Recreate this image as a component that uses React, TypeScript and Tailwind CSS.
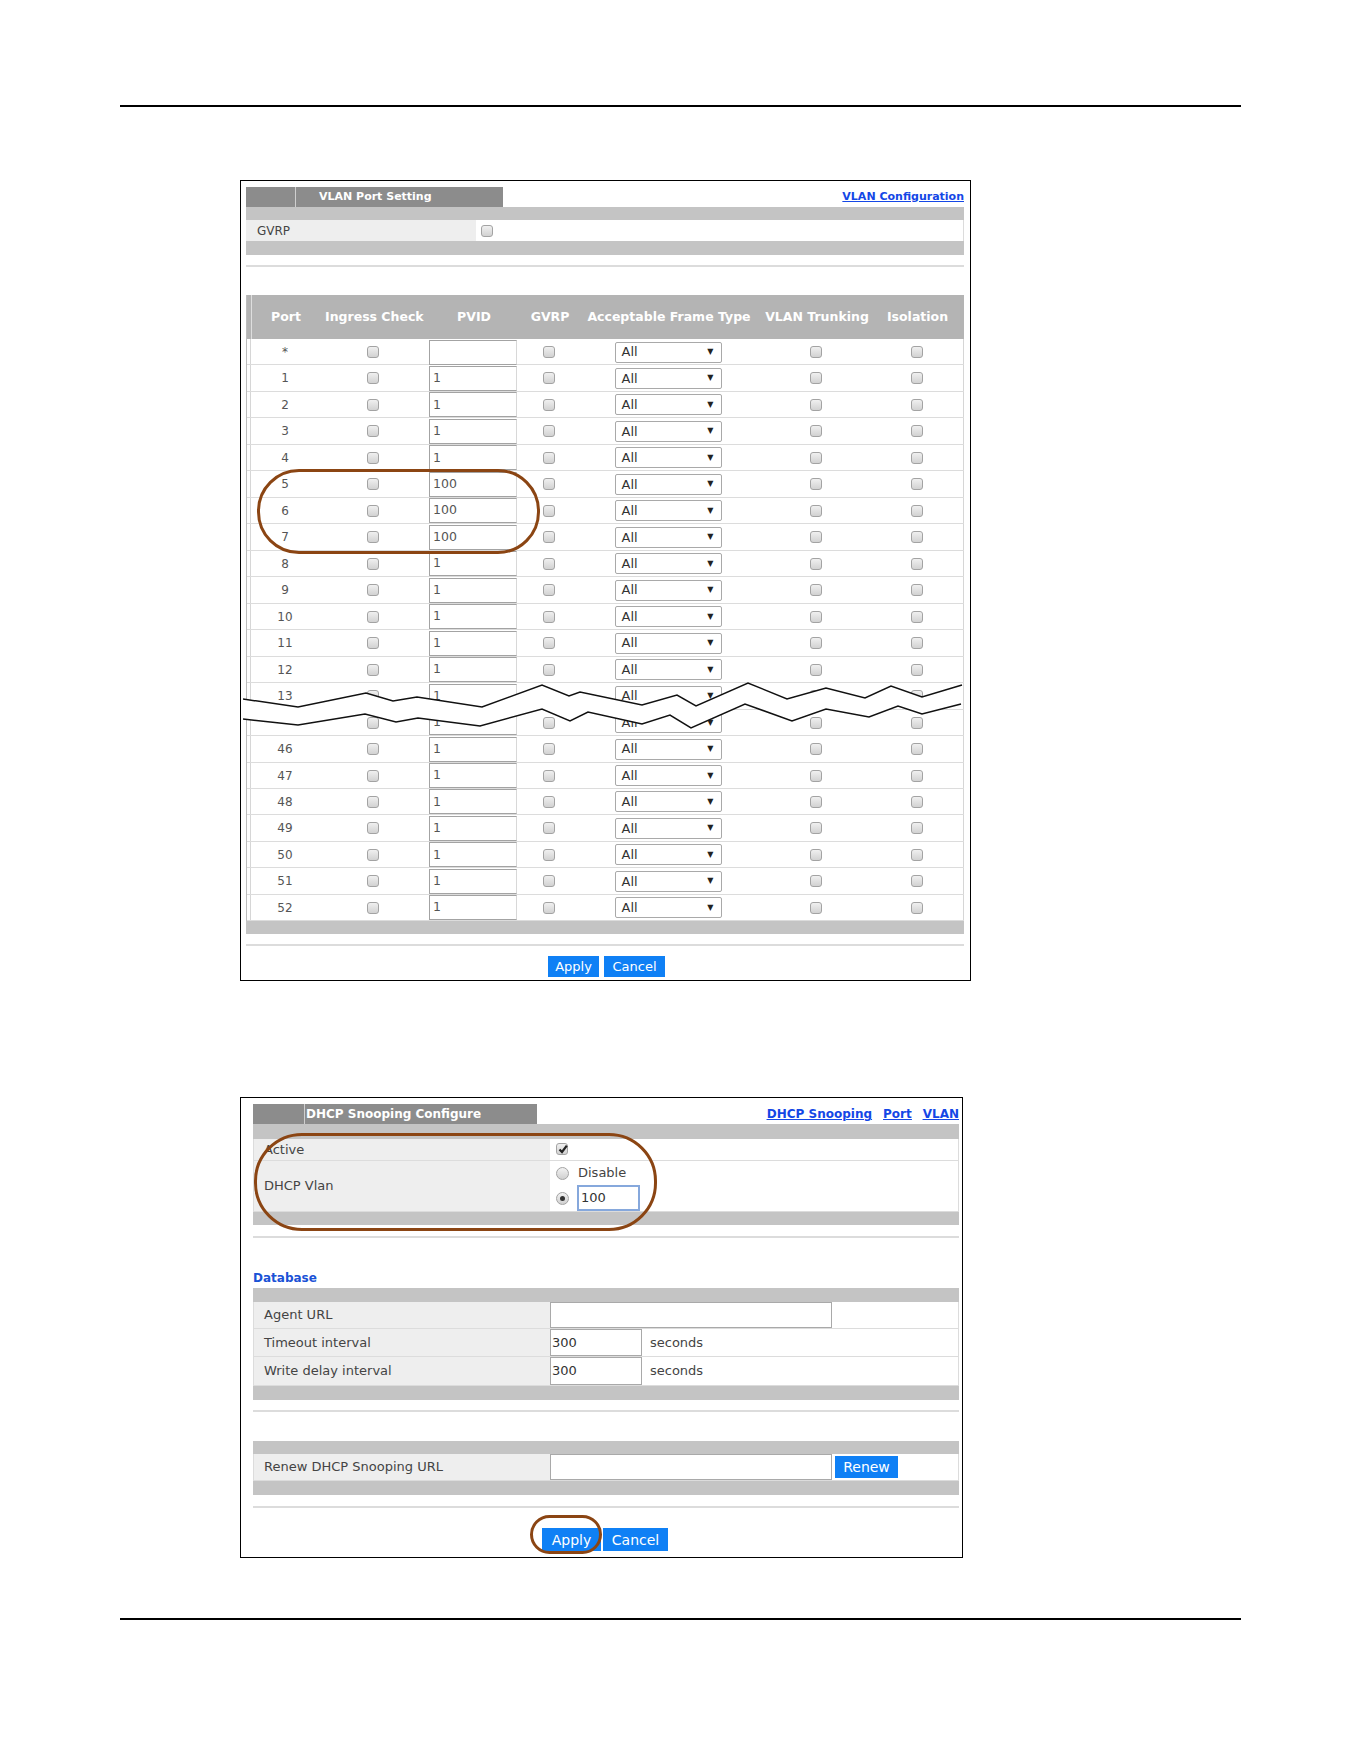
import React from "react";

const ports = ["*", "1", "2", "3", "4", "5", "6", "7", "8", "9", "10", "11", "12", "13", "", "46", "47", "48", "49", "50", "51", "52"];

// zig-zag "cut" across the port list
const upper = "0,19 55,27 123,13 150,21 174,17 239,27 299,5 326,16 337,12 399,25 434,15 453,26 505,3 544,19 583,8 622,18 648,6 679,17 719,5";
const lower = "0,39 55,45 122,34 153,42 175,38 237,46 299,29 327,41 345,32 399,44 427,35 448,48 502,24 549,41 583,29 626,37 655,26 679,34 718,24";
const band = upper + " " + lower.split(" ").reverse().join(" ");

function Check({ checked }: { checked?: boolean }) {
  return (
    <span className="relative inline-block h-[12px] w-[12px] rounded-[3px] border border-[#a3a3a3] bg-linear-to-b from-[#f0f0f0] to-[#d2d2d2]">
      {checked && (
        <svg viewBox="0 0 12 12" className="absolute left-[0px] top-[-1px] h-[12px] w-[12px]">
          <path d="M2.5 6.5 L5 9 L9.8 2.6" fill="none" stroke="#222" strokeWidth="2.2" />
        </svg>
      )}
    </span>
  );
}

function Radio({ checked }: { checked?: boolean }) {
  return (
    <span className="flex h-[13px] w-[13px] items-center justify-center rounded-full border border-[#a3a3a3] bg-linear-to-b from-[#f2f2f2] to-[#d0d0d0]">
      {checked && <span className="h-[5px] w-[5px] rounded-full bg-[#333]" />}
    </span>
  );
}

function GrayBar({ h }: { h: string }) {
  return <div className={`${h} bg-[#c4c4c4]`} />;
}

function Rule({ mt }: { mt: string }) {
  return <div className={`${mt} h-[2px] bg-[#dcdcdc]`} />;
}

function BlueButton({ label, w, h, size }: { label: string; w: string; h: string; size: string }) {
  return <button className={`${w} ${h} ${size} bg-[#0f80f5] text-white leading-none`}>{label}</button>;
}

function PortRow({ port }: { port: string }) {
  const pvid = port === "*" ? "" : ["5", "6", "7"].includes(port) ? "100" : "1";
  return (
    <div className="flex h-[26.47px] border-b border-[#dcdcdc]">
      <div className="w-[4px]" />
      <div className="grid flex-1 grid-cols-[73px_98px_102px_50px_188px_108px_93px] items-center border-l border-r border-[#d6d6d6]">
        <div className="pr-[5px] text-center text-[12px] text-[#555]">{port}</div>
        <div className="flex justify-center">
          <Check />
        </div>
        <div className="flex h-[26px] items-center justify-center">
          <div className="flex h-[25px] w-[88px] items-center border-t border-l border-b border-r border-t-[#a3a3a3] border-l-[#a3a3a3] border-b-[#a3a3a3] border-r-[#d8d8d8] bg-white pl-[3px] text-[12.5px] text-[#555]">
            {pvid}
          </div>
        </div>
        <div className="flex justify-center">
          <Check />
        </div>
        <div className="flex justify-center">
          <div className="flex h-[21px] w-[107px] items-center justify-between rounded-[2px] border border-[#a9a9a9] bg-white pl-[6px] pr-[7px] text-[13px] text-[#333]">
            <span>All</span>
            <span className="text-[8px] text-[#222]">▼</span>
          </div>
        </div>
        <div className="flex justify-center">
          <Check />
        </div>
        <div className="flex justify-center">
          <Check />
        </div>
      </div>
    </div>
  );
}

function VlanPortSetting() {
  const heads = ["Port", "Ingress Check", "PVID", "GVRP", "Acceptable Frame Type", "VLAN Trunking", "Isolation"];
  return (
    <div className="relative ml-[240px] mt-[73px] h-[801px] w-[731px] border border-black pl-[5px] pr-[6px] pt-[6px]">
      <div className="flex h-[20px] items-center justify-between">
        <div className="flex h-[20px] w-[257px] bg-[#8c8c8c]">
          <div className="w-[50px] border-r border-[#cfcfcf]" />
          <span className="pl-[23px] text-[11px] font-bold leading-[20px] text-white">VLAN Port Setting</span>
        </div>
        <a className="text-[11px] font-bold text-[#1447e6] underline">VLAN Configuration</a>
      </div>
      <GrayBar h="h-[13px]" />
      <div className="flex h-[21px]">
        <div className="flex w-[230px] items-center bg-[#eeeeee] pl-[11px] text-[12px] text-[#444]">GVRP</div>
        <div className="flex flex-1 items-center border-r border-[#dcdcdc] bg-white pl-[5px]">
          <Check />
        </div>
      </div>
      <GrayBar h="h-[14px]" />
      <Rule mt="mt-[10px]" />

      <div className="mt-[28px] border-l border-[#bdbdbd]">
        <div className="flex h-[44px] bg-[#b4b4b4]">
          <div className="w-[4px]" />
          <div className="grid flex-1 grid-cols-[73px_98px_102px_50px_188px_108px_93px] items-center border-l border-[#dedede]">
            {heads.map((h) => (
              <div key={h} className={`text-center text-[12.5px] font-bold whitespace-nowrap text-white ${h === "Port" ? "pr-[5px]" : ""}`}>
                {h}
              </div>
            ))}
          </div>
        </div>
        {ports.map((p, i) => (
          <PortRow key={i} port={p} />
        ))}
      </div>
      <GrayBar h="h-[13px]" />
      <Rule mt="mt-[10px]" />
      <div className="mt-[10px] flex justify-center gap-[5px] pl-[3px]">
        <BlueButton label="Apply" w="w-[51px]" h="h-[21px]" size="text-[13px]" />
        <BlueButton label="Cancel" w="w-[61px]" h="h-[21px]" size="text-[13px]" />
      </div>

      {/* highlight around ports 5-7 */}
      <div className="absolute left-[16px] top-[288px] h-[85px] w-[283px] rounded-[42px] border-[3px] border-[#8b4513]" />

      <svg className="absolute left-[2px] top-[499px]" width="720" height="60" viewBox="0 0 720 60">
        <polygon points={band} fill="white" />
        <polyline points={upper} fill="none" stroke="#111" strokeWidth="1.5" />
        <polyline points={lower} fill="none" stroke="#111" strokeWidth="1.5" />
      </svg>
    </div>
  );
}

function FormRow({ label, h, top, children }: { label: string; h: string; top?: boolean; children: React.ReactNode }) {
  return (
    <div className={`flex ${h} border-b border-[#dcdcdc]`}>
      <div className="flex w-[297px] items-center border-l border-[#dcdcdc] bg-[#eeeeee] pl-[10px] text-[13px] text-[#444]">{label}</div>
      <div className={`flex flex-1 border-r border-[#dcdcdc] bg-white ${top ? "items-start" : "items-center"}`}>{children}</div>
    </div>
  );
}

function Field({ w, value }: { w: string; value?: string }) {
  return (
    <div className={`flex h-full ${w} items-center border border-[#a9a9a9] bg-white pl-[1px] text-[13px] text-[#333]`}>{value}</div>
  );
}

function DhcpSnoopingConfigure() {
  return (
    <div className="relative ml-[240px] mt-[116px] h-[461px] w-[723px] border border-black pl-[12px] pr-[3px] pt-[6px]">
      <div className="flex h-[20px] items-center justify-between">
        <div className="flex h-[20px] w-[284px] bg-[#8c8c8c]">
          <div className="w-[52px] border-r border-[#cfcfcf]" />
          <span className="pl-[1px] text-[12px] font-bold leading-[20px] text-white">DHCP Snooping Configure</span>
        </div>
        <div className="flex gap-[11px] text-[12px] font-bold text-[#1447e6] underline">
          <a>DHCP Snooping</a>
          <a>Port</a>
          <a>VLAN</a>
        </div>
      </div>
      <GrayBar h="h-[15px]" />
      <FormRow label="Active" h="h-[22px]">
        <span className="pl-[6px]">
          <Check checked />
        </span>
      </FormRow>
      <FormRow label="DHCP Vlan" h="h-[51px]" top>
        <div className="flex flex-col gap-[5px] pl-[6px] pt-[5px]">
          <div className="flex h-[14px] items-center gap-[9px] text-[13px] text-[#444]">
            <Radio />
            <span>Disable</span>
          </div>
          <div className="flex items-center gap-[8px]">
            <Radio checked />
            <div className="flex h-[26px] w-[63px] items-center border-2 border-[#86a8dc] bg-white pl-[2px] text-[13px] text-[#333]">100</div>
          </div>
        </div>
      </FormRow>
      <GrayBar h="h-[13px]" />
      <Rule mt="mt-[11px]" />
      <div className="flex h-[50px] items-end pb-[1px] text-[12px] font-bold text-[#1a52d6]">Database</div>
      <GrayBar h="h-[14px]" />
      <FormRow label="Agent URL" h="h-[27px]">
        <Field w="w-[282px]" />
      </FormRow>
      <FormRow label="Timeout interval" h="h-[28px]">
        <Field w="w-[92px]" value="300" />
        <span className="pl-[8px] text-[13px] text-[#444]">seconds</span>
      </FormRow>
      <FormRow label="Write delay interval" h="h-[29px]">
        <Field w="w-[92px]" value="300" />
        <span className="pl-[8px] text-[13px] text-[#444]">seconds</span>
      </FormRow>
      <GrayBar h="h-[14px]" />
      <Rule mt="mt-[10px]" />
      <div className="mt-[29px]" />
      <GrayBar h="h-[13px]" />
      <FormRow label="Renew DHCP Snooping URL" h="h-[27px]">
        <Field w="w-[282px]" />
        <span className="pl-[3px]">
          <BlueButton label="Renew" w="w-[63px]" h="h-[22px]" size="text-[14px]" />
        </span>
      </FormRow>
      <GrayBar h="h-[14px]" />
      <Rule mt="mt-[11px]" />
      <div className="mt-[20px] flex gap-[2px] pl-[289px]">
        <BlueButton label="Apply" w="w-[59px]" h="h-[23px]" size="text-[14px]" />
        <BlueButton label="Cancel" w="w-[65px]" h="h-[23px]" size="text-[14px]" />
      </div>

      <div className="absolute left-[13px] top-[35px] h-[98px] w-[403px] rounded-[48px] border-[3px] border-[#8b4513]" />
      <div className="absolute left-[289px] top-[417px] h-[39px] w-[72px] rounded-[20px] border-[3px] border-[#8b4513]" />
    </div>
  );
}

export default function App() {
  return (
    <div className="h-[1761px] w-[1361px] overflow-hidden bg-white font-['DejaVu_Sans',sans-serif]">
      <div className="pt-[105px]">
        <div className="ml-[120px] h-[2px] w-[1121px] bg-black" />
      </div>
      <VlanPortSetting />
      <DhcpSnoopingConfigure />
      <div className="ml-[120px] mt-[60px] h-[2px] w-[1121px] bg-black" />
    </div>
  );
}
